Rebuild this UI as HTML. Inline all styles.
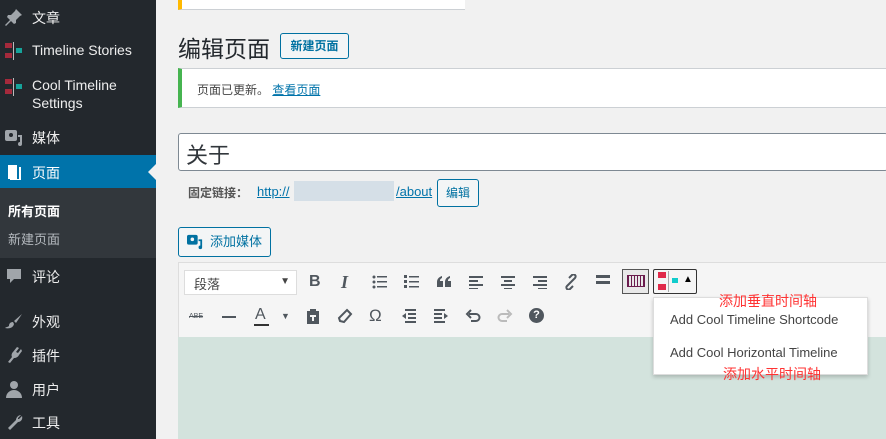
<!DOCTYPE html>
<html><head><meta charset="utf-8"><style>
*{margin:0;padding:0;box-sizing:border-box}
body{width:886px;height:439px;overflow:hidden;background:#f1f1f1;font-family:"Liberation Sans","Noto Sans CJK SC",sans-serif;position:relative}
.sb{position:absolute;left:0;top:0;width:156px;height:439px;background:#23282d}
.mi{position:absolute;left:0;width:156px;color:#eee;font-size:14px}
.mi .t{position:absolute;left:32px}
.ic{position:absolute;left:5px;width:18px;height:18px}
.a{position:absolute}
.btn{position:absolute;border:1px solid #0071a1;border-radius:3px;background:#f3f5f6;color:#0071a1;font-size:12px;text-align:center}
svg.i{position:absolute;top:274px;width:16px;height:16px}
svg.j{position:absolute;top:308px;width:16px;height:16px}
</style></head><body>
<div class="sb">
 <div class="mi" style="top:8px"><svg class="ic" style="top:0" viewBox="0 0 18 18"><path d="M11 1l6 6-2 1-4 4 0 3-2 1-3-3-5 5-1-1 5-5-3-3 1-2 3 0 4-4z" fill="#a0a5aa"/></svg><span class="t">文章</span></div>
 <div class="mi" style="top:42px"><svg class="ic" style="top:0" viewBox="0 0 18 18"><rect x="0" y="1" width="7" height="5" fill="#a52a3c"/><rect x="0" y="11" width="7" height="5" fill="#a52a3c"/><rect x="8" y="0" width="1" height="18" fill="#bbb"/><rect x="11" y="6" width="6" height="5" fill="#16a39a"/></svg><span class="t">Timeline Stories</span></div>
 <div class="mi" style="top:76px"><svg class="ic" style="top:2px" viewBox="0 0 18 18"><rect x="0" y="1" width="7" height="5" fill="#a52a3c"/><rect x="0" y="11" width="7" height="5" fill="#a52a3c"/><rect x="8" y="0" width="1" height="18" fill="#bbb"/><rect x="11" y="6" width="6" height="5" fill="#16a39a"/></svg><span class="t" style="line-height:18px">Cool Timeline<br>Settings</span></div>
 <div class="mi" style="top:128px"><svg class="ic" style="top:1px" viewBox="0 0 18 18"><rect x="0" y="1" width="12" height="11" rx="2" fill="#a0a5aa"/><circle cx="6" cy="6" r="2" fill="#23282d"/><path d="M13 6h4v9a2 2 0 1 1-2-2v-5h-2z" fill="#a0a5aa"/></svg><span class="t">媒体</span></div>
 <div class="mi" style="top:155px;height:33px;background:#0073aa;color:#fff"><svg class="ic" style="top:8px" viewBox="0 0 18 18"><path d="M3 2h9v14H3z" fill="#fff"/><path d="M14 4h2v13H5v-1h9z" fill="#fff"/></svg><span class="t" style="top:8px">页面</span><div class="a" style="right:0;top:9px;border:8px solid transparent;border-right-color:#f1f1f1"></div></div>
 <div class="a" style="top:188px;left:0;width:156px;height:70px;background:#32373c"></div>
 <div class="a" style="top:201px;left:8px;color:#fff;font-size:13px;font-weight:bold">所有页面</div>
 <div class="a" style="top:229px;left:8px;color:#b4b9be;font-size:13px">新建页面</div>
 <div class="mi" style="top:267px"><svg class="ic" style="top:0" viewBox="0 0 18 18"><path d="M2 2h14v10H9l-4 4v-4H2z" fill="#a0a5aa"/></svg><span class="t">评论</span></div>
 <div class="mi" style="top:312px"><svg class="ic" style="top:0" viewBox="0 0 18 18"><path d="M17 2l-8 7 2 2 6-9zM8 10c-3 0-4 2-4 4-1 1-3 1-4 2 4 1 8 0 9-4z" fill="#a0a5aa"/></svg><span class="t">外观</span></div>
 <div class="mi" style="top:346px"><svg class="ic" style="top:0" viewBox="0 0 18 18"><path d="M12 1l2 1-3 4 2 1 3-4 1 2-3 4c-1 2-3 3-5 3l-4 5-2-1 4-5c-1-2 0-4 1-5z" fill="#a0a5aa"/></svg><span class="t">插件</span></div>
 <div class="mi" style="top:380px"><svg class="ic" style="top:0" viewBox="0 0 18 18"><circle cx="9" cy="5" r="4" fill="#a0a5aa"/><path d="M1 18c0-5 4-8 8-8s8 3 8 8z" fill="#a0a5aa"/></svg><span class="t">用户</span></div>
 <div class="mi" style="top:413px"><svg class="ic" style="top:0" viewBox="0 0 18 18"><path d="M16 2l-3 3 0 1 1 0 3-3c1 3-1 6-4 6l-8 8-2-2 8-8c0-3 3-5 5-5z" fill="#a0a5aa"/></svg><span class="t">工具</span></div>
</div>
<div class="a" style="left:178px;top:0;width:287px;height:10px;background:#fff;border-left:4px solid #ffb900;border-bottom:1px solid #ccd0d4"></div>
<div class="a" style="left:178px;top:30px;font-size:23px;color:#23282d">编辑页面</div>
<div class="btn" style="left:280px;top:33px;width:69px;height:26px;line-height:24px;font-weight:bold">新建页面</div>
<div class="a" style="left:178px;top:68px;width:708px;height:40px;background:#fff;border-left:4px solid #46b450;border-top:1px solid #ccd0d4;border-bottom:1px solid #ccd0d4"></div>
<div class="a" style="left:197px;top:81px;font-size:12px;color:#444">页面已更新。 <span style="color:#0073aa;text-decoration:underline">查看页面</span></div>
<div class="a" style="left:178px;top:133px;width:710px;height:38px;background:#fff;border:1px solid #7e8993;border-radius:3px"></div>
<div class="a" style="left:186px;top:138px;font-size:22px;color:#32373c">关于</div>
<div class="a" style="left:188px;top:184px;font-size:12px;color:#555;font-weight:bold">固定链接：</div>
<div class="a" style="left:257px;top:184px;font-size:13px;color:#0073aa;text-decoration:underline">http://</div>
<div class="a" style="left:294px;top:181px;width:100px;height:20px;background:#d5dfe7"></div>
<div class="a" style="left:396px;top:184px;font-size:13px;color:#0073aa;text-decoration:underline">/about</div>
<div class="btn" style="left:437px;top:179px;width:42px;height:28px;line-height:26px;font-size:12px">编辑</div>
<div class="btn" style="left:178px;top:227px;width:93px;height:30px;line-height:28px;color:#0071a1;text-align:right;padding-right:8px;font-size:13px">添加媒体</div>
<svg class="a" style="left:187px;top:234px" width="16" height="16" viewBox="0 0 18 18"><rect x="0" y="1" width="12" height="11" rx="2" fill="#0071a1"/><circle cx="6" cy="6" r="2" fill="#f3f5f6"/><path d="M13 6h4v9a2 2 0 1 1-2-2v-5h-2z" fill="#0071a1"/></svg>
<div class="a" style="left:178px;top:262px;width:710px;height:76px;background:#f5f5f5;border:1px solid #ddd;border-bottom:none"></div>
<div class="a" style="left:178px;top:337px;width:710px;height:102px;background:#d3e3dd"></div>
<div class="a" style="left:184px;top:270px;width:113px;height:25px;background:#fff;border:1px solid #ddd;font-size:13px;color:#444;padding:3px 9px">段落<span style="position:absolute;right:6px;top:5px;font-size:10px">▼</span></div>
<div class="a" style="left:309px;top:273px;font-size:16px;font-weight:bold;color:#50575e">B</div>
<div class="a" style="left:341px;top:272px;font-size:18px;font-weight:bold;font-style:italic;font-family:'Liberation Serif',serif;color:#50575e">I</div>
<svg class="i" style="left:372px" viewBox="0 0 16 16" fill="#50575e"><circle cx="2" cy="3" r="1.5"/><circle cx="2" cy="8" r="1.5"/><circle cx="2" cy="13" r="1.5"/><rect x="5" y="2" width="10" height="1.5"/><rect x="5" y="7" width="10" height="1.5"/><rect x="5" y="12" width="10" height="1.5"/></svg>
<svg class="i" style="left:404px" viewBox="0 0 16 16" fill="#50575e"><rect x="0" y="1" width="3" height="3"/><rect x="0" y="6" width="3" height="3"/><rect x="0" y="11" width="3" height="3"/><rect x="5" y="2" width="10" height="1.5"/><rect x="5" y="7" width="10" height="1.5"/><rect x="5" y="12" width="10" height="1.5"/></svg>
<svg class="i" style="left:436px" viewBox="0 0 16 16" fill="#50575e"><path d="M1 13v-5c0-3 2-5 5-6v2c-2 1-2 2-2 3h3v6zM9 13v-5c0-3 2-5 5-6v2c-2 1-2 2-2 3h3v6z"/></svg>
<svg class="i" style="left:468px" viewBox="0 0 16 16" fill="#50575e"><rect x="1" y="2" width="14" height="2"/><rect x="1" y="6" width="9" height="2"/><rect x="1" y="10" width="14" height="2"/><rect x="1" y="14" width="9" height="1"/></svg>
<svg class="i" style="left:500px" viewBox="0 0 16 16" fill="#50575e"><rect x="1" y="2" width="14" height="2"/><rect x="4" y="6" width="8" height="2"/><rect x="1" y="10" width="14" height="2"/><rect x="4" y="14" width="8" height="1"/></svg>
<svg class="i" style="left:532px" viewBox="0 0 16 16" fill="#50575e"><rect x="1" y="2" width="14" height="2"/><rect x="6" y="6" width="9" height="2"/><rect x="1" y="10" width="14" height="2"/><rect x="6" y="14" width="9" height="1"/></svg>
<svg class="i" style="left:563px" viewBox="0 0 16 16" fill="none" stroke="#50575e" stroke-width="2"><path d="M7 9l-3 3a2 2 0 0 0 3 3l3-3M9 7l3-3a2 2 0 0 0-3-3L6 4M6 10l4-4"/></svg>
<div class="a" style="left:596px;top:275px;width:14px;height:3px;background:#50575e;box-shadow:0 6px 0 #50575e"></div>
<div class="a" style="left:622px;top:269px;width:27px;height:25px;border:1px solid #555;background:#e8e8e8"></div>
<div class="a" style="left:627px;top:275px;width:18px;height:12px;border:1px solid #6a1b4d;background:repeating-linear-gradient(90deg,#6a1b4d 0 1px,transparent 1px 3px)"></div>
<div class="a" style="left:653px;top:269px;width:44px;height:25px;border:1px solid #333;border-radius:2px;background:#f5f5f5"></div>
<div class="a" style="left:658px;top:272px;width:8px;height:6px;background:#e02a4a"></div>
<div class="a" style="left:658px;top:284px;width:8px;height:6px;background:#e02a4a"></div>
<div class="a" style="left:668px;top:271px;width:1px;height:21px;background:#aaa"></div>
<div class="a" style="left:672px;top:278px;width:6px;height:5px;background:#1cc"></div>
<div class="a" style="left:683px;top:274px;font-size:10px">▲</div>
<div class="a" style="left:189px;top:313px;font-size:7px;color:#50575e;text-decoration:line-through">ABE</div>
<div class="a" style="left:222px;top:316px;width:14px;height:2px;background:#50575e"></div>
<div class="a" style="left:255px;top:306px;font-size:16px;color:#50575e">A</div>
<div class="a" style="left:254px;top:324px;width:15px;height:2px;background:#333"></div>
<div class="a" style="left:281px;top:311px;font-size:9px;color:#50575e">▼</div>
<svg class="j" style="left:305px" viewBox="0 0 16 16" fill="#50575e"><path d="M2 3h3V1h6v2h3v13H2z"/><rect x="5" y="7" width="6" height="2" fill="#f5f5f5"/><rect x="7" y="7" width="2" height="6" fill="#f5f5f5"/></svg>
<svg class="j" style="left:337px" viewBox="0 0 16 16" fill="none" stroke="#50575e" stroke-width="2"><path d="M10 2l4 4-7 8-4-1-1-3z"/></svg>
<div class="a" style="left:369px;top:306px;font-size:17px;color:#50575e">Ω</div>
<svg class="j" style="left:401px" viewBox="0 0 16 16" fill="#50575e"><rect x="4" y="1" width="11" height="2"/><rect x="7" y="5" width="8" height="2"/><rect x="7" y="9" width="8" height="2"/><rect x="4" y="13" width="11" height="2"/><path d="M1 8l4-3v6z"/></svg>
<svg class="j" style="left:433px" viewBox="0 0 16 16" fill="#50575e"><rect x="1" y="1" width="11" height="2"/><rect x="1" y="5" width="8" height="2"/><rect x="1" y="9" width="8" height="2"/><rect x="1" y="13" width="11" height="2"/><path d="M15 8l-4-3v6z"/></svg>
<svg class="j" style="left:465px" viewBox="0 0 16 16" fill="none" stroke="#50575e" stroke-width="2"><path d="M4 6h7a3.5 3.5 0 0 1 0 7H6"/><path d="M6 2L2 6l4 4" /></svg>
<svg class="j" style="left:497px" viewBox="0 0 16 16" fill="none" stroke="#bbb" stroke-width="2"><path d="M12 6H5a3.5 3.5 0 0 0 0 7h5"/><path d="M10 2l4 4-4 4"/></svg>
<div class="a" style="left:529px;top:308px;width:15px;height:15px;border-radius:50%;background:#50575e;color:#fff;font-size:11px;font-weight:bold;text-align:center;line-height:15px">?</div>
<div class="a" style="left:653px;top:297px;width:215px;height:78px;background:#fff;border:1px solid #ddd;box-shadow:0 2px 4px rgba(0,0,0,.2)"></div>
<div class="a" style="left:670px;top:312px;font-size:13px;color:#444">Add Cool Timeline Shortcode</div>
<div class="a" style="left:670px;top:345px;font-size:13px;color:#444">Add Cool Horizontal Timeline</div>
<div class="a" style="left:719px;top:291px;font-size:14px;color:#f33">添加垂直时间轴</div>
<div class="a" style="left:723px;top:364px;font-size:14px;color:#f33">添加水平时间轴</div>
</body></html>
